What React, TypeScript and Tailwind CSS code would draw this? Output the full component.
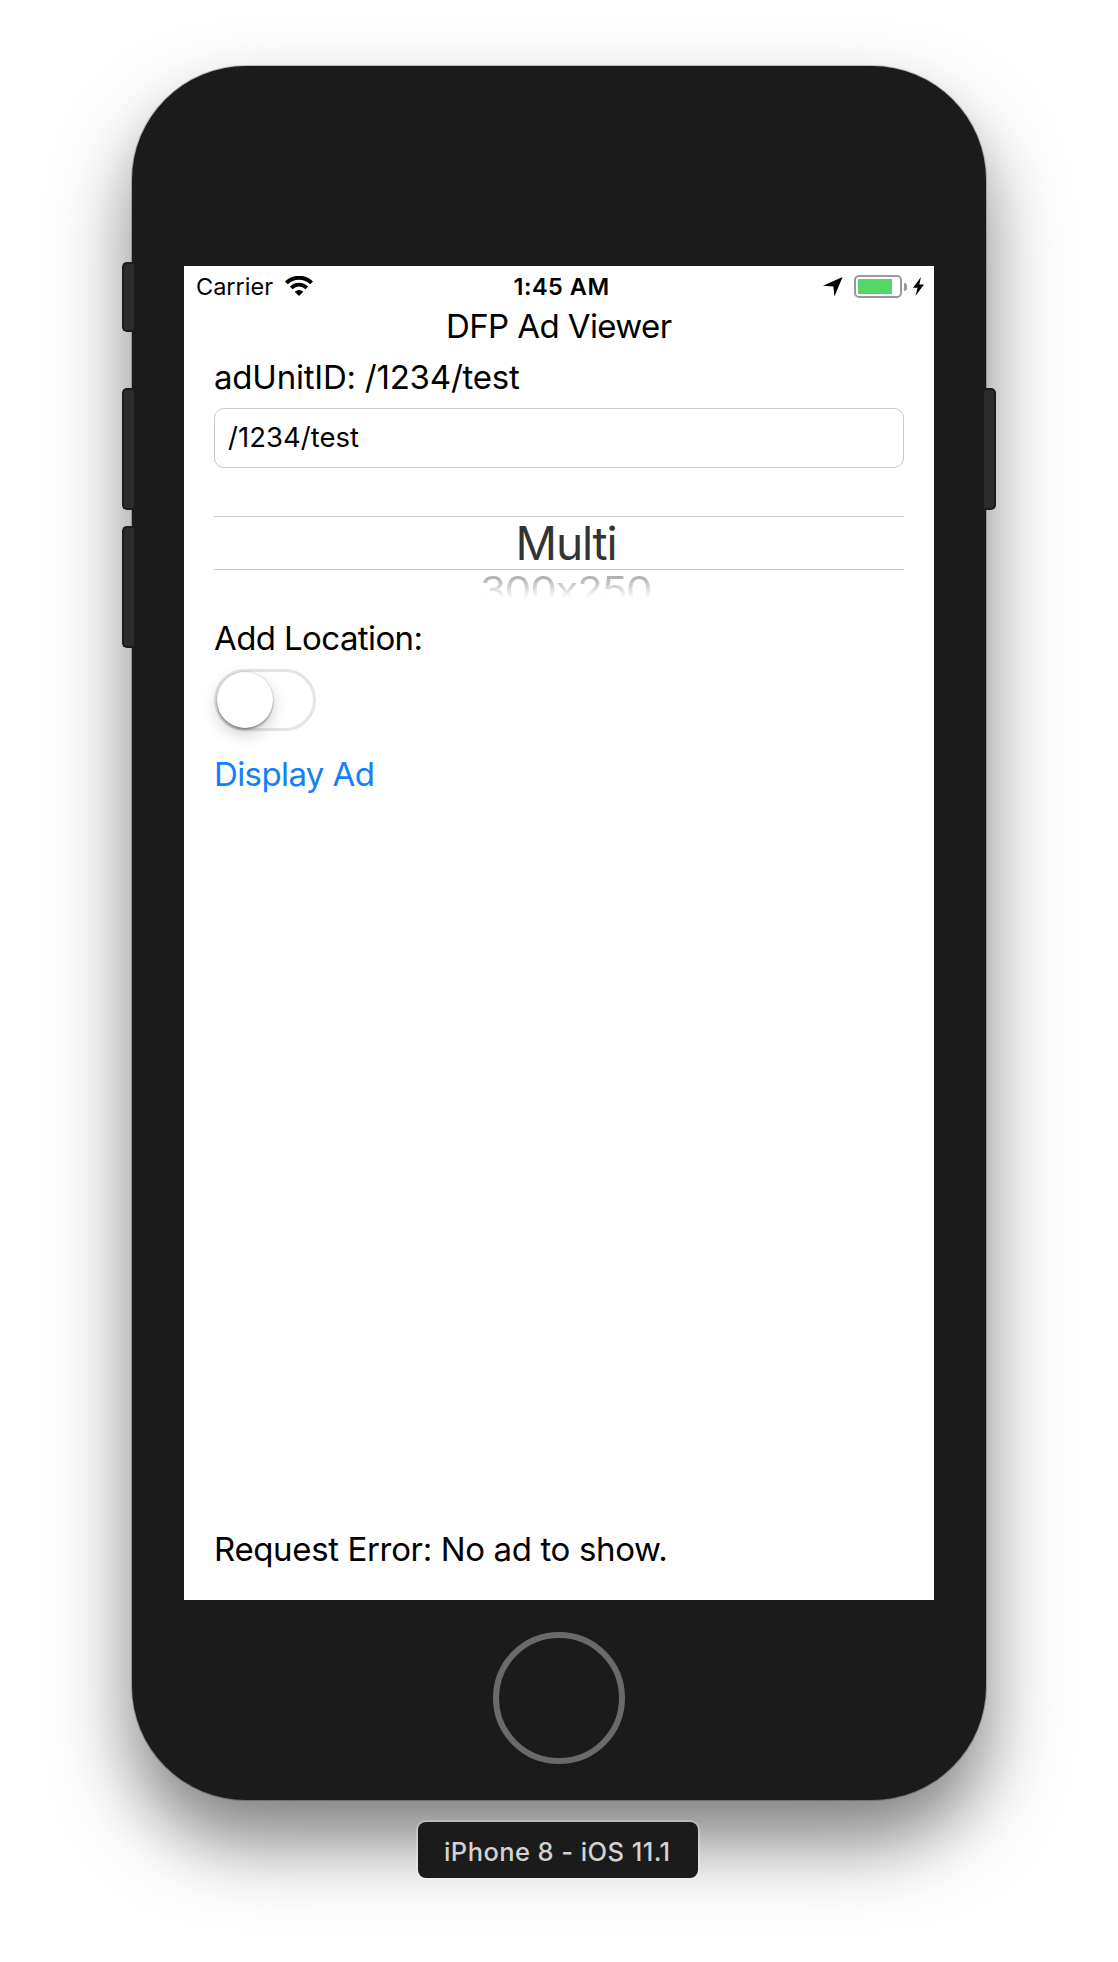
function WifiIcon() {
  return (
    <svg width="28" height="20" viewBox="0 0 28 20" fill="none" className="shrink-0">
      <path d="M1.4 6.9 A18 18 0 0 1 26.6 6.9" stroke="#000" strokeWidth="4" />
      <path d="M6.2 11.8 A11 11 0 0 1 21.8 11.8" stroke="#000" strokeWidth="3.8" />
      <path d="M14 20 L9.7 15.7 A6.2 6.2 0 0 1 18.3 15.7 Z" fill="#000" />
    </svg>
  );
}

function LocationIcon() {
  return (
    <svg width="20" height="20" viewBox="0 0 20 20" className="shrink-0">
      <path d="M19.6 0 L11.4 19.4 L10.4 9.4 L0 8.8 Z" fill="#000" />
    </svg>
  );
}

function Battery() {
  return (
    <div className="flex items-center gap-[2px]">
      <div className="h-[23px] w-12 rounded-[5px] border-2 border-[#9a9a9a] p-[2px]">
        <div className="h-[15px] w-[34px] bg-[#53d769]" />
      </div>
      <div className="h-2 w-[3px] rounded-r-full bg-[#9a9a9a]" />
    </div>
  );
}

function BoltIcon() {
  return (
    <svg width="11" height="19" viewBox="0 0 11 19" className="shrink-0">
      <path d="M8 0 L0 10.8 L4.6 10.8 L2.4 19 L11 7.4 L6.3 7.4 Z" fill="#000" />
    </svg>
  );
}

function StatusBar() {
  return (
    <div className="relative flex h-10 items-start justify-between text-[23.5px] leading-[42px]">
      <div className="flex pl-3">
        <span className="w-[89px]">Carrier</span>
        <span className="pt-[10px]">
          <WifiIcon />
        </span>
      </div>
      <span className="absolute left-[329.5px] top-0 font-semibold tracking-[0.5px]">1:45 AM</span>
      <div className="flex items-center pr-[10px] pt-[9px]">
        <LocationIcon />
        <div className="ml-[11px]">
          <Battery />
        </div>
        <div className="ml-[6px]">
          <BoltIcon />
        </div>
      </div>
    </div>
  );
}

function Picker() {
  return (
    <div className="mt-12 h-[82px]">
      <div className="h-[54px] border-y border-[#c8c8c8] pl-[301.5px] text-[46px] leading-[52px] tracking-[-1.15px] text-[#333]">
        Multi
      </div>
      <div className="h-[28px] overflow-hidden [mask-image:linear-gradient(to_bottom,#000_4px,transparent_28px)]">
        <div className="origin-top scale-y-[0.86] pl-[266px] pt-[6px] text-[42px] leading-[34px] tracking-[-1.15px] text-[#a4a4a4]">
          300x250
        </div>
      </div>
    </div>
  );
}

function Toggle() {
  return (
    <div className="mt-[11px] h-[62px] w-[102px] rounded-full border-[3px] border-[#e5e5e5]">
      <div className="h-14 w-14 rounded-full bg-white shadow-[0_0_0_1px_rgba(0,0,0,0.07),0_2px_2px_rgba(0,0,0,0.3),0_6px_16px_rgba(0,0,0,0.2)]" />
    </div>
  );
}

function Screen() {
  return (
    <div className="ml-[52px] flex h-[1334px] w-[750px] flex-col bg-white text-[33px] leading-10 text-black">
      <StatusBar />
      <div className="pl-[262px] tracking-[-0.6px]">DFP Ad Viewer</div>
      <div className="flex flex-1 flex-col px-[30px]">
        <div className="mt-[11px] tracking-[-0.22px]">adUnitID: /1234/test</div>
        <div className="mt-[11px] h-[60px] rounded-[10px] border border-[#c8c8c8] pl-[13px] text-[27.5px] leading-[56px] tracking-[0.03px]">
          /1234/test
        </div>
        <Picker />
        <div className="mt-5 tracking-[-0.6px]">Add Location:</div>
        <Toggle />
        <div className="mt-[23px] tracking-[-0.6px] text-[#157efb]">Display Ad</div>
        <div className="mb-[31px] mt-auto tracking-[-0.36px]">Request Error: No ad to show.</div>
      </div>
    </div>
  );
}

const leftButtons = ["top-[196px] h-[70px]", "top-[322px] h-[122px]", "top-[460px] h-[122px]"];

export default function App() {
  return (
    <div className="flex h-[1962px] w-[1118px] flex-col items-center overflow-hidden bg-white pt-[66px] font-['Inter',sans-serif]">
      <div className="relative h-[1734px] w-[854px] shrink-0 rounded-[114px] bg-[#1b1b1b] pt-[200px] shadow-[0_0_0_1px_rgba(0,0,0,0.22),0_42px_76px_rgba(0,0,0,0.5)]">
        {leftButtons.map((place) => (
          <div
            key={place}
            className={`absolute -left-[10px] w-3 rounded-l-[5px] border-2 border-r-0 border-[#1c1c1c] bg-[#2c2c2c] ${place}`}
          />
        ))}
        <div className="absolute -right-[10px] top-[322px] h-[122px] w-3 rounded-r-[5px] border-2 border-l-0 border-[#1c1c1c] bg-[#2c2c2c]" />
        <Screen />
        <div className="mx-auto mt-8 h-[132px] w-[132px] rounded-full border-[6px] border-[#6a6a6a]" />
      </div>
      <div className="relative mr-[2px] mt-[22px] h-14 w-[280px] shrink-0 rounded-lg bg-[#1b1b1b] pl-[26px] text-[25.5px] font-medium leading-[59px] tracking-[0.42px] text-[#d2d2d2] shadow-[0_0_0_2px_rgba(255,255,255,0.25)]">
        iPhone 8 - iOS 11.1
      </div>
    </div>
  );
}
